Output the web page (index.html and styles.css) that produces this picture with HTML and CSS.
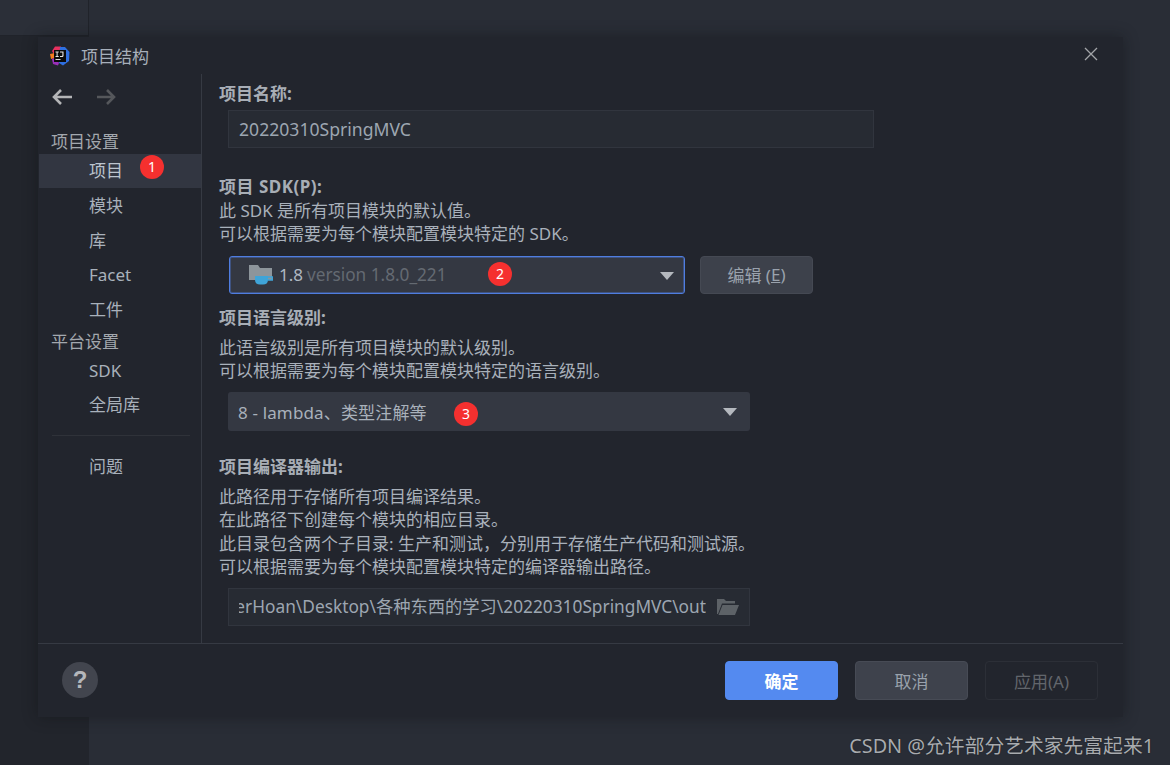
FILE: index.html
```html
<!DOCTYPE html>
<html lang="zh">
<head>
<meta charset="utf-8">
<title>项目结构</title>
<link rel="stylesheet" href="styles.css">
</head>
<body>
<div class="bg-tab"></div>
<div class="bg-side"></div>
<div class="dialog">
  <header class="titlebar">
    <svg class="logo" width="20" height="20" viewBox="0 0 20 20">
      <path d="M2 5 L5 0.500 L11 0.500 L12 8 L6 12 Z" fill="#e8315f"/>
      <path d="M10 1 L15 1 L19.500 6 L19 15 L13 19.500 L9 17 Z" fill="#2f6fe0"/>
      <path d="M0 8 L5 7 L5 12 L1 13 Z" fill="#f57c1f"/>
      <path d="M2 13 L6 11 L9 17 L8 19.500 L3 18 Z" fill="#9a2fb8"/>
      <rect x="4" y="4" width="12" height="12" fill="#0a0a0a"/>
      <rect x="5.500" y="13" width="5" height="1" fill="#d8d8d8"/>
      <path d="M5.500 5.500h3.200v1h-1.100v3.400h1.100v1H5.500v-1h1.100V6.500H5.500zM10 5.500h3.500v4.200c0 .9-.6 1.200-1.600 1.200H10v-1h1.700c.5 0 .7-.2.700-.5V6.500H10z" fill="#e6e6e6"/>
    </svg>
    <span class="title">项目结构</span>
    <svg class="close" width="14" height="14" viewBox="0 0 14 14"><path d="M1 1 L13 13 M13 1 L1 13" stroke="#a3a5a8" stroke-width="1.300" fill="none"/></svg>
  </header>
  <div class="body">
    <nav class="sidebar">
      <div class="arrows">
        <svg width="22" height="18" viewBox="0 0 22 18"><path d="M21 9 H3 M10 2 L3 9 L10 16" stroke="#b4b5b7" stroke-width="2.600" fill="none"/></svg>
        <svg width="20" height="18" viewBox="0 0 20 18"><path d="M0 9 H17 M10 2 L17 9 L10 16" stroke="#55575b" stroke-width="2.600" fill="none"/></svg>
      </div>
      <div class="group">项目设置</div>
      <div class="item selected">项目<span class="badge">1</span></div>
      <div class="item">模块</div>
      <div class="item">库</div>
      <div class="item">Facet</div>
      <div class="item">工件</div>
      <div class="group group-2">平台设置</div>
      <div class="item">SDK</div>
      <div class="item">全局库</div>
      <div class="nav-sep"></div>
      <div class="item">问题</div>
    </nav>
    <main class="content">
      <h2 class="label">项目名称:</h2>
      <div class="field name-field">20220310SpringMVC</div>

      <h2 class="label sdk-label">项目 SDK(P):</h2>
      <p class="hint sdk-hint">此 SDK 是所有项目模块的默认值。</p>
      <p class="hint">可以根据需要为每个模块配置模块特定的 SDK。</p>
      <div class="sdk-row">
        <div class="combo focused">
          <svg class="sdk-icon" width="24" height="22" viewBox="0 0 24 22">
            <path d="M0 1 H9 L11 4 H23 V16 H0 Z" fill="#8d959b"/>
            <path d="M6 12 H19 V16 C19 19 17 20.500 14 20.500 H11 C8 20.500 6 19 6 16 Z" fill="#3fa4d8"/>
            <path d="M19 13 H23.300 V16 H19" fill="none" stroke="#3fa4d8" stroke-width="1.400"/>
          </svg>
          <span class="sdk-name">1.8</span><span class="sdk-version">version 1.8.0_221</span>
          <span class="badge badge-2">2</span>
          <span class="caret caret-focused"></span>
        </div>
        <div class="btn btn-edit">编辑 (<u>E</u>)</div>
      </div>

      <h2 class="label lang-label">项目语言级别:</h2>
      <p class="hint lang-hint">此语言级别是所有项目模块的默认级别。</p>
      <p class="hint">可以根据需要为每个模块配置模块特定的语言级别。</p>
      <div class="combo lang-combo">
        <span class="lang-text">8 - lambda、类型注解等</span>
        <span class="badge badge-3">3</span>
        <span class="caret"></span>
      </div>

      <h2 class="label out-label">项目编译器输出:</h2>
      <p class="hint out-hint">此路径用于存储所有项目编译结果。</p>
      <p class="hint">在此路径下创建每个模块的相应目录。</p>
      <p class="hint">此目录包含两个子目录: 生产和测试，分别用于存储生产代码和测试源。</p>
      <p class="hint">可以根据需要为每个模块配置模块特定的编译器输出路径。</p>
      <div class="field path-field">
        <span class="path-clip"><span class="path-text">C:\Users\HerHoan\Desktop\各种东西的学习\20220310SpringMVC\out</span></span>
        <svg width="22" height="18" viewBox="0 0 22 18"><path d="M0 1 H7 L9 3 H18 V5.500 H5 L1 16 H0 Z" fill="#5d6267"/><path d="M5.500 7 H22 L18 17 H1.500 Z" fill="#5d6267"/></svg>
      </div>
    </main>
  </div>
  <footer class="footer">
    <div class="help">?</div>
    <div class="actions">
      <div class="btn btn-primary">确定</div>
      <div class="btn btn-cancel">取消</div>
      <div class="btn btn-disabled">应用(A)</div>
    </div>
  </footer>
</div>
<div class="watermark">CSDN @允许部分艺术家先富起来1</div>
</body>
</html>
```
FILE: styles.css
```css
* { box-sizing: border-box; }
html, body { margin: 0; height: 100%; }
body {
  position: relative;
  width: 1170px;
  height: 765px;
  overflow: hidden;
  background: #292d36;
  font-family: "Noto Sans", "Noto Sans CJK SC", sans-serif;
  font-size: 17px;
  color: #a9b1bb;
}
.bg-tab {
  position: absolute; left: 0; top: 0; width: 89px; height: 36px;
  background: #2b2f38; border-right: 1px solid #20232a; border-bottom: 1px solid #20232a;
}
.bg-side {
  position: absolute; left: 0; top: 36px; width: 89px; height: 729px; background: #22252c;
}
.dialog {
  position: absolute; left: 38px; top: 37px; width: 1085px; height: 680px;
  background: #22252d;
  box-shadow: 0 0 14px rgba(15, 17, 21, .45);
  display: flex; flex-direction: column;
}
.titlebar { height: 37px; display: flex; align-items: center; padding: 0 25px 0 12px; flex: none; }
.logo { flex: none; }
.title { margin-left: 11px; font-size: 17px; color: #a7afba; }
.close { margin-left: auto; margin-bottom: 4px; }
.body { flex: 1; display: flex; min-height: 0; }
.sidebar { width: 164px; border-right: 1px solid #363a43; flex: none; padding-top: 7px; }
.arrows { display: flex; gap: 24px; height: 32px; align-items: center; padding-left: 13px; margin-bottom: 14px; }
.group { height: 27px; line-height: 30px; padding-left: 13px; color: #a3a8ae; }
.group-2 { height: 26px; line-height: 27px; }
.item { height: 34.700px; line-height: 34px; padding-left: 51px; position: relative; color: #a9b1bb; }
.item.selected { background: #323641; color: #bcc4ce; margin-left: 1px; padding-left: 50px; height: 34px; margin-bottom: 1px; }
.nav-sep { height: 1px; margin: 12px 11px 14px 14px; background: #2f3239; }
.badge {
  position: absolute; width: 24px; height: 24px; border-radius: 50%;
  background: #f5302f; color: #fff; font-size: 14px; line-height: 24px; text-align: center;
}
.selected .badge { left: 101px; top: 1px; }
.content { flex: 1; padding: 8px 0 0 17px; min-width: 0; }
.label { margin: 0; font-size: 17px; font-weight: 700; line-height: 24px; color: #a8aeb6; height: 24px; }
.hint { margin: 0; line-height: 23.300px; height: 23.300px; color: #a9b1bb; }
.field {
  border: 1px solid #31353e; background: #272b33; height: 38px; line-height: 36px; color: #9da6b1;
}
.name-field { margin: 4px 0 0 9px; width: 646px; padding-left: 10px; font-size: 17.600px; }
.sdk-label { margin-top: 27px; letter-spacing: .5px; }
.sdk-hint { margin-top: 0; }
.sdk-row { display: flex; margin-top: 10px; margin-left: 10px; gap: 15px; align-items: center; }
.combo {
  position: relative; height: 39px; display: flex; align-items: center;
  background: #343842; border-radius: 3px; color: #a9b1bb;
}
.focused { width: 456px; height: 38px; border: 1px solid #4f7de0; box-shadow: inset 0 0 0 1px rgba(79,125,224,.4); padding-left: 19px; }
.sdk-icon { flex: none; margin-right: 6px; }
.sdk-name { color: #b0b8c2; }
.sdk-version { margin-left: 4px; font-size: 17.200px; color: #646a72; }
.caret {
  position: absolute; right: 13px; top: 16px; width: 0; height: 0;
  border-left: 7.500px solid transparent; border-right: 7.500px solid transparent; border-top: 8px solid #b4b8be;
}
.caret-focused { right: 10px; top: 15px; }
.badge-2 { left: 258px; top: 5px; }
.badge-3 { left: 226px; top: 10px; }
.btn {
  height: 39px; border-radius: 4px; display: flex; align-items: center; justify-content: center;
  background: #3d414b; border: 1px solid #454953; color: #9aa2ad;
}
.btn-edit { width: 113px; height: 38px; }
.lang-label { margin-top: 12px; }
.lang-hint { margin-top: 6px; }
.lang-combo { width: 522px; margin: 10px 0 0 9px; padding-left: 10px; }
.lang-text { letter-spacing: .15px; }
.out-label { margin-top: 24px; }
.out-hint { margin-top: 6px; }
.path-field {
  width: 522px; margin: 10px 0 0 9px; display: flex; align-items: center; padding: 0 10px 0 10px; gap: 11px;
}
.path-clip { flex: 1; min-width: 0; overflow: hidden; display: flex; justify-content: flex-end; white-space: nowrap; }
.path-text { flex: none; font-size: 17.300px; }
.path-field svg { flex: none; }
.footer {
  height: 74px; border-top: 1px solid #363a43; flex: none;
  display: flex; align-items: center; padding: 0 25px 1px 24px;
}
.help {
  width: 36px; height: 36px; border-radius: 50%; background: #42454e; color: #b5b7bb;
  font: 700 24px/36px "Liberation Sans", sans-serif; text-align: center;
}
.actions { margin-left: auto; display: flex; gap: 17px; }
.actions .btn { width: 113px; }
.btn-primary { background: #548af0; border-color: #548af0; color: #fff; font-weight: 700; }
.btn-cancel { background: #3e424c; border-color: #474b55; }
.btn-disabled { background: transparent; border-color: #2c2f37; color: #62666c; }
.watermark {
  position: absolute; right: 16px; top: 733px; font-size: 19.800px; line-height: 26px; color: #a8abaf;
  text-shadow: 0 0 1px rgba(0,0,0,.6);
}
```
